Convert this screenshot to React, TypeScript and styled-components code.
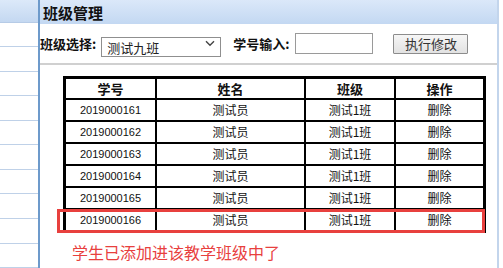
import React from 'react'
import styled, { createGlobalStyle } from 'styled-components'

const GlobalStyle = createGlobalStyle`
  html, body {
    margin: 0;
    padding: 0;
    background: #ffffff;
    font-family: "Noto Sans CJK SC", "Liberation Sans", sans-serif;
  }
`

const Page = styled.div`
  display: flex;
  width: 503px;
  height: 268px;
  overflow: hidden;
  background: #ffffff;
`

const Sidebar = styled.div`
  width: 38px;
  flex-shrink: 0;
  display: flex;
  flex-direction: column;
`

const SideHead = styled.div`
  height: 22px;
  background: linear-gradient(to bottom, #dce9f9 0%, #c4d8f1 100%);
  border-bottom: 1px solid #b6cbe6;
`

const SideItem = styled.div`
  height: 24px;
  border-bottom: 1px solid #bfd1e8;
`

const Main = styled.div`
  width: 457px;
  flex-shrink: 0;
  border-left: 2px solid #6d9acb;
  border-right: 2px solid #c3d5ec;
  display: flex;
  flex-direction: column;
`

const Header = styled.div`
  height: 24px;
  display: flex;
  align-items: center;
  padding-left: 3px;
  background: linear-gradient(to bottom, #dbe8f9 0%, #c3d8f2 100%);
  font-size: 15px;
  font-weight: bold;
  color: #111;
  line-height: 1;
`

const Toolbar = styled.div`
  display: flex;
  align-items: center;
  height: 21px;
  margin-top: 9px;
`

const Label = styled.span<{ $gap?: number }>`
  font-size: 13px;
  font-weight: bold;
  color: #111;
  margin-left: ${(p) => p.$gap ?? 0}px;
  margin-right: 5px;
  white-space: nowrap;
`

const SelectWrap = styled.div`
  position: relative;
  width: 120px;
  height: 20px;
`

const Select = styled.select`
  appearance: none;
  width: 100%;
  height: 100%;
  box-sizing: border-box;
  border: 1px solid #8f8f8f;
  background: #fff;
  padding: 0 0 0 5px;
  font-family: "Noto Sans CJK SC", sans-serif;
  font-size: 13px;
  color: #222;
  outline: none;
`

const Chevron = styled.svg`
  position: absolute;
  right: 6px;
  top: 6px;
  pointer-events: none;
`

const Input = styled.input`
  width: 78px;
  height: 21px;
  box-sizing: border-box;
  border: 1px solid #9a9a9a;
  padding: 0;
  margin-left: 1px;
  outline: none;
`

const Button = styled.button`
  width: 75px;
  height: 20px;
  margin-left: 20px;
  box-sizing: border-box;
  border: 1px solid #8c8c8c;
  border-radius: 1px;
  background: linear-gradient(to bottom, #f6f6f6 0%, #e2e2e2 100%);
  font-family: "Noto Sans CJK SC", sans-serif;
  font-size: 13px;
  color: #333;
  padding: 0;
  line-height: 1;
`

const Separator = styled.div`
  height: 2px;
  margin-top: 9px;
  background: #d0d0d0;
`

const TableWrap = styled.div`
  position: relative;
  margin: 11px 0 0 23px;
  width: 411px;
`

const Table = styled.table`
  border-collapse: collapse;
  width: 411px;
  table-layout: fixed;
  border: 3px solid #000;
`

const Th = styled.th<{ $w: number }>`
  width: ${(p) => p.$w}px;
  height: 19px;
  padding: 0;
  border: 2px solid #000;
  font-size: 13px;
  font-weight: bold;
  line-height: 19px;
  color: #111;
`

const Td = styled.td<{ $num?: boolean }>`
  height: 20px;
  padding: 0;
  border: 2px solid #000;
  text-align: center;
  font-family: ${(p) => (p.$num ? '"Liberation Sans", sans-serif' : '"Noto Sans CJK SC", sans-serif')};
  font-size: ${(p) => (p.$num ? 11 : 12)}px;
  line-height: 20px;
  color: #111;
`

const Highlight = styled.div`
  position: absolute;
  left: -6px;
  top: 133px;
  width: 428px;
  height: 24px;
  box-sizing: border-box;
  border: 3px solid #e8403e;
  pointer-events: none;
`

const Notice = styled.div`
  margin: 10px 0 0 32px;
  font-size: 16px;
  line-height: 18px;
  color: #e8403e;
`

const rows = ['2019000161', '2019000162', '2019000163', '2019000164', '2019000165', '2019000166']

const App: React.FC = () => {
  return (
    <Page>
      <GlobalStyle />
      <Sidebar>
        <SideHead />
        {Array.from({ length: 10 }).map((_, i) => (
          <SideItem key={i} />
        ))}
      </Sidebar>
      <Main>
        <Header>班级管理</Header>
        <Toolbar>
          <Label>班级选择:</Label>
          <SelectWrap>
            <Select defaultValue="9">
              <option value="9">测试九班</option>
            </Select>
            <Chevron width="10" height="7" viewBox="0 0 10 7">
              <path d="M1 1.2 L5 5.2 L9 1.2" fill="none" stroke="#444" strokeWidth="1.4" />
            </Chevron>
          </SelectWrap>
          <Label $gap={12}>学号输入:</Label>
          <Input />
          <Button>执行修改</Button>
        </Toolbar>
        <Separator />
        <TableWrap>
          <Table>
            <thead>
              <tr>
                <Th $w={89}>学号</Th>
                <Th $w={147}>姓名</Th>
                <Th $w={88}>班级</Th>
                <Th $w={87}>操作</Th>
              </tr>
            </thead>
            <tbody>
              {rows.map((id) => (
                <tr key={id}>
                  <Td $num>{id}</Td>
                  <Td>测试员</Td>
                  <Td>测试1班</Td>
                  <Td>删除</Td>
                </tr>
              ))}
            </tbody>
          </Table>
          <Highlight />
        </TableWrap>
        <Notice>学生已添加进该教学班级中了</Notice>
      </Main>
    </Page>
  )
}

export default App
